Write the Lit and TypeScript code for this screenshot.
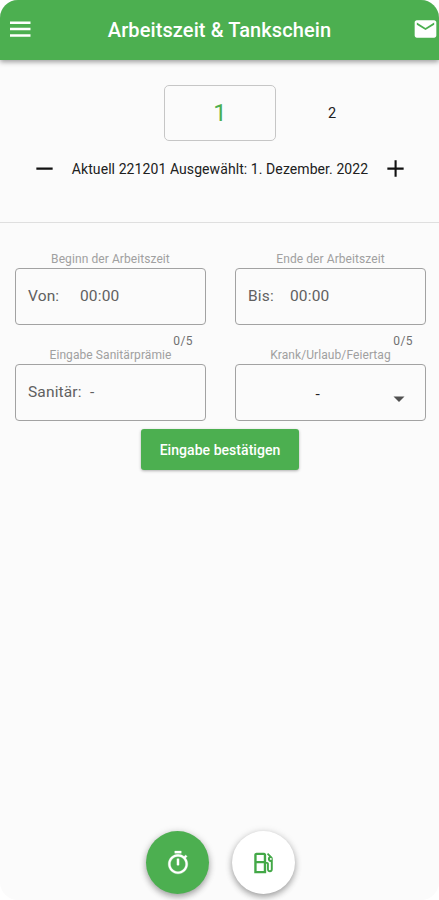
import { LitElement, html, css } from "lit";
import { customElement } from "lit/decorators.js";

@customElement("app-root")
export class AppRoot extends LitElement {
  static styles = css`
    :host { display: block; height: 900px; background: #fff; font-family: Roboto, "Liberation Sans", sans-serif; color: #202020; }
    * { box-sizing: border-box; }
    .screen { height: 900px; display: flex; flex-direction: column; background: #fbfbfb; border-radius: 18px; overflow: hidden; }
    header { height: 60px; flex: none; display: grid; grid-template-columns: 26px 1fr 26px; align-items: center; padding: 0 1px 2px 8px; background: #4caf50; color: #fff; box-shadow: 0 2px 5px rgba(0, 0, 0, 0.38); }
    svg { display: block; fill: currentColor; flex: none; }
    h1 { margin: 0; padding: 2px 7px 0 0; font-size: 20px; font-weight: 500; line-height: 24px; letter-spacing: 0.1px; text-align: center; white-space: nowrap; }
    .days { display: grid; grid-template-columns: 112px 112px; margin: 25px 0 0 164px; flex: none; }
    .day { height: 56px; display: flex; align-items: center; justify-content: center; font-size: 14.5px; }
    .day.active { border: 1px solid #c6c6c6; border-radius: 5px; font-size: 24px; color: #4caf50; }
    .date { height: 82px; flex: none; display: flex; justify-content: space-between; padding: 16px 32px 0 33px; border-bottom: 1px solid #dfdfdf; }
    .date svg { width: 23px; height: 23px; color: #111; }
    .date p { margin: 0; font-size: 14px; line-height: 24px; letter-spacing: 0.08px; white-space: nowrap; }
    .form { display: grid; grid-template-columns: 191px 191px; column-gap: 29px; padding: 28px 0 0 15px; flex: none; }
    .label { height: 17px; line-height: 17px; font-size: 12px; letter-spacing: 0.08px; text-align: center; color: #a0a0a0; white-space: nowrap; }
    .box { height: 57px; border: 1px solid #a2a2a2; border-radius: 4px; padding: 0 12px 1px; display: flex; align-items: center; font-size: 15.5px; letter-spacing: 0.15px; color: #606060; }
    .box.select { justify-content: flex-end; padding-right: 14px; }
    .select .value { margin-right: 67px; padding-top: 4px; color: #222; }
    .select svg { width: 24px; height: 24px; margin-top: 13px; color: #505050; }
    .von { width: 52px; } .bis { width: 42px; } .san { width: 62px; }
    .count { height: 22px; padding: 8px 13px 0 0; text-align: right; font-size: 12px; line-height: 16px; letter-spacing: 0.4px; color: #707070; }
    .confirm { width: 158px; height: 41px; flex: none; margin: 8px 0 0 141px; padding: 0; border: 0; border-radius: 3px; background: #4caf50; color: #fff; font: 500 14px/40px Roboto, sans-serif; letter-spacing: 0.05px; box-shadow: 0 1px 3px rgba(0, 0, 0, 0.3); white-space: nowrap; }
    nav { margin-top: auto; display: flex; justify-content: center; gap: 23px; padding: 0 0 6px 2px; }
    .fab { width: 63px; height: 63px; border-radius: 50%; display: flex; align-items: center; justify-content: center; background: #fff; color: #43a847; box-shadow: 0 3px 6px rgba(0, 0, 0, 0.3), 0 1px 8px rgba(0, 0, 0, 0.12); }
    .fab.on { background: #4caf50; color: #fff; }
  `;

  render() {
    return html`
      <div class="screen">
        <header>
          <svg width="24" height="24" viewBox="0 0 24 24"><path d="M2 4.500h20.500V7H2zm0 6.300h20.500v2.500H2zm0 6.500h20.500v2.500H2z" /></svg>
          <h1>Arbeitszeit &amp; Tankschein</h1>
          <svg width="27" height="26" viewBox="0 0 24 24"><path d="M20 4H4c-1.100 0-2 .9-2 2v12c0 1.100.9 2 2 2h16c1.100 0 2-.9 2-2V6c0-1.100-.9-2-2-2zm0 4-8 5-8-5V6l8 5 8-5v2z" /></svg>
        </header>
        <div class="days">
          <div class="day active">1</div>
          <div class="day">2</div>
        </div>
        <div class="date">
          <svg viewBox="0 0 24 24"><path d="M3.500 11h17v2.200h-17z" /></svg>
          <p>Aktuell 221201 Ausgewählt: 1. Dezember. 2022</p>
          <svg viewBox="0 0 24 24"><path d="M3.500 11H11V3.500h2.200V11h7.300v2.200h-7.300v7.300H11v-7.300H3.500z" /></svg>
        </div>
        <div class="form">
          <div>
            <div class="label">Beginn der Arbeitszeit</div>
            <div class="box"><span class="von">Von:</span><span>00:00</span></div>
            <div class="count">0/5</div>
          </div>
          <div>
            <div class="label">Ende der Arbeitszeit</div>
            <div class="box"><span class="bis">Bis:</span><span>00:00</span></div>
            <div class="count">0/5</div>
          </div>
          <div>
            <div class="label">Eingabe Sanitärprämie</div>
            <div class="box"><span class="san">Sanitär:</span><span>-</span></div>
          </div>
          <div>
            <div class="label">Krank/Urlaub/Feiertag</div>
            <div class="box select"><span class="value">-</span><svg viewBox="0 0 24 24"><path d="m6.500 9.500 5.500 5.500 5.500-5.500z" /></svg></div>
          </div>
        </div>
        <button class="confirm">Eingabe bestätigen</button>
        <nav>
          <div class="fab on">
            <svg width="26" height="26" viewBox="0 0 24 24"><path stroke="currentColor" stroke-width=".3" d="M15 1H9v2h6V1zm-4 13h2V8h-2v6zm8.030-6.610 1.420-1.420c-.43-.51-.9-.99-1.410-1.410l-1.420 1.420C16.070 4.740 14.120 4 12 4c-4.970 0-9 4.030-9 9s4.020 9 9 9 9-4.030 9-9c0-2.120-.74-4.070-1.970-5.610zM12 20c-3.870 0-7-3.130-7-7s3.130-7 7-7 7 3.130 7 7-3.130 7-7 7z" /></svg>
          </div>
          <div class="fab">
            <svg width="26" height="26" viewBox="0 0 24 24"><path fill-rule="evenodd" d="M5 2.500h7c1.100 0 2 .9 2 2V11h.8c1 0 1.700.8 1.700 1.700v5.100c0 .6.4 1 .9 1s.9-.4.9-1V11c-1.900-.3-2.700-1.300-2.700-2.800 0-1 .4-1.700 1.100-2.200l-2-2 1.100-1.200 3.300 3.200c.7.7 1 1.300 1 2.200v9.500c0 1.700-1.100 2.800-2.600 2.800s-2.700-1.200-2.700-2.800v-4.900H14v8.700H3v-17c0-1.100.9-2 2-2zm.2 2.200v5.500h6.600V4.700zm0 7.500v7.100h6.600v-7.100zM18.300 7.300a.9.9 0 1 0 0 1.800.9.9 0 0 0 0-1.800z" /></svg>
          </div>
        </nav>
      </div>
    `;
  }
}
